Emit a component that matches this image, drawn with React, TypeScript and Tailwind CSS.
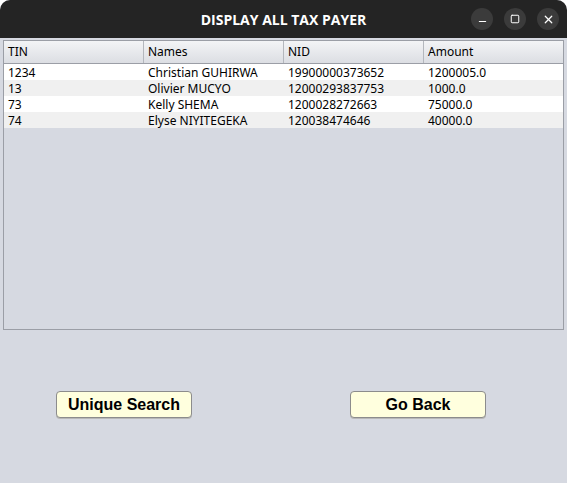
import { Minus, Square, X } from "lucide-react";

const payers = [
  { tin: "1234", name: "Christian GUHIRWA", nid: "19900000373652", amount: "1200005.0" },
  { tin: "13", name: "Olivier MUCYO", nid: "12000293837753", amount: "1000.0" },
  { tin: "73", name: "Kelly SHEMA", nid: "1200028272663", amount: "75000.0" },
  { tin: "74", name: "Elyse NIYITEGEKA", nid: "120038474646", amount: "40000.0" },
];

const columns = ["TIN", "Names", "NID", "Amount"];

export default function App() {
  return (
    <div className="w-[567px] h-[483px] bg-white overflow-hidden">
      <div className="flex flex-col h-full rounded-t-[10px] overflow-hidden bg-[#d6d9e1]">
        {/* Title bar */}
        <div className="relative h-[38px] shrink-0 bg-[#242424] flex items-center justify-center">
          <span className="text-white font-bold text-[14px] font-['Open_Sans',sans-serif]">
            DISPLAY ALL TAX PAYER
          </span>
          <div className="absolute right-[8px] top-[8px] flex gap-[11px]">
            <button className="w-[22px] h-[22px] rounded-full bg-[#3b3b3b] flex items-center justify-center text-white">
              <Minus size={11} strokeWidth={2.2} className="mt-[5px]" />
            </button>
            <button className="w-[22px] h-[22px] rounded-full bg-[#3b3b3b] flex items-center justify-center text-white">
              <Square size={10} strokeWidth={2.4} />
            </button>
            <button className="w-[22px] h-[22px] rounded-full bg-[#3b3b3b] flex items-center justify-center text-white">
              <X size={13} strokeWidth={2.2} />
            </button>
          </div>
        </div>

        {/* Table */}
        <div className="mx-[3px] mt-[2px] h-[290px] border border-[#9b9ea6] font-['Noto_Sans',sans-serif] text-[12px] text-black">
          <div className="grid grid-cols-[140px_140px_140px_1fr] h-[23px] border-b border-[#9b9ea6] bg-gradient-to-b from-[#f3f4f6] to-[#dcdee3]">
            {columns.map((c, i) => (
              <div
                key={c}
                className={`flex items-center pl-[4px] leading-none ${
                  i < columns.length - 1 ? "border-r border-[#b4b7bd]" : ""
                }`}
              >
                {c}
              </div>
            ))}
          </div>
          {payers.map((p, i) => (
            <div
              key={p.tin}
              className={`grid grid-cols-[140px_140px_140px_1fr] h-[16px] items-center leading-none pt-[1px] ${
                i % 2 === 0 ? "bg-white" : "bg-[#f0f0f0]"
              }`}
            >
              <div className="pl-[4px]">{p.tin}</div>
              <div className="pl-[4px]">{p.name}</div>
              <div className="pl-[4px]">{p.nid}</div>
              <div className="pl-[4px]">{p.amount}</div>
            </div>
          ))}
        </div>

        {/* Actions */}
        <div className="flex mt-[61px]">
          <button className="ml-[56px] w-[136px] h-[27px] rounded-[4px] border border-[#8c8c8c] bg-[#ffffde] text-black font-bold text-[16px] font-['Liberation_Sans',sans-serif] shadow-[0_1px_0_#b8b8b8]">
            Unique Search
          </button>
          <button className="ml-[158px] w-[136px] h-[27px] rounded-[4px] border border-[#8c8c8c] bg-[#ffffde] text-black font-bold text-[16px] font-['Liberation_Sans',sans-serif] shadow-[0_1px_0_#b8b8b8]">
            Go Back
          </button>
        </div>
      </div>
    </div>
  );
}
